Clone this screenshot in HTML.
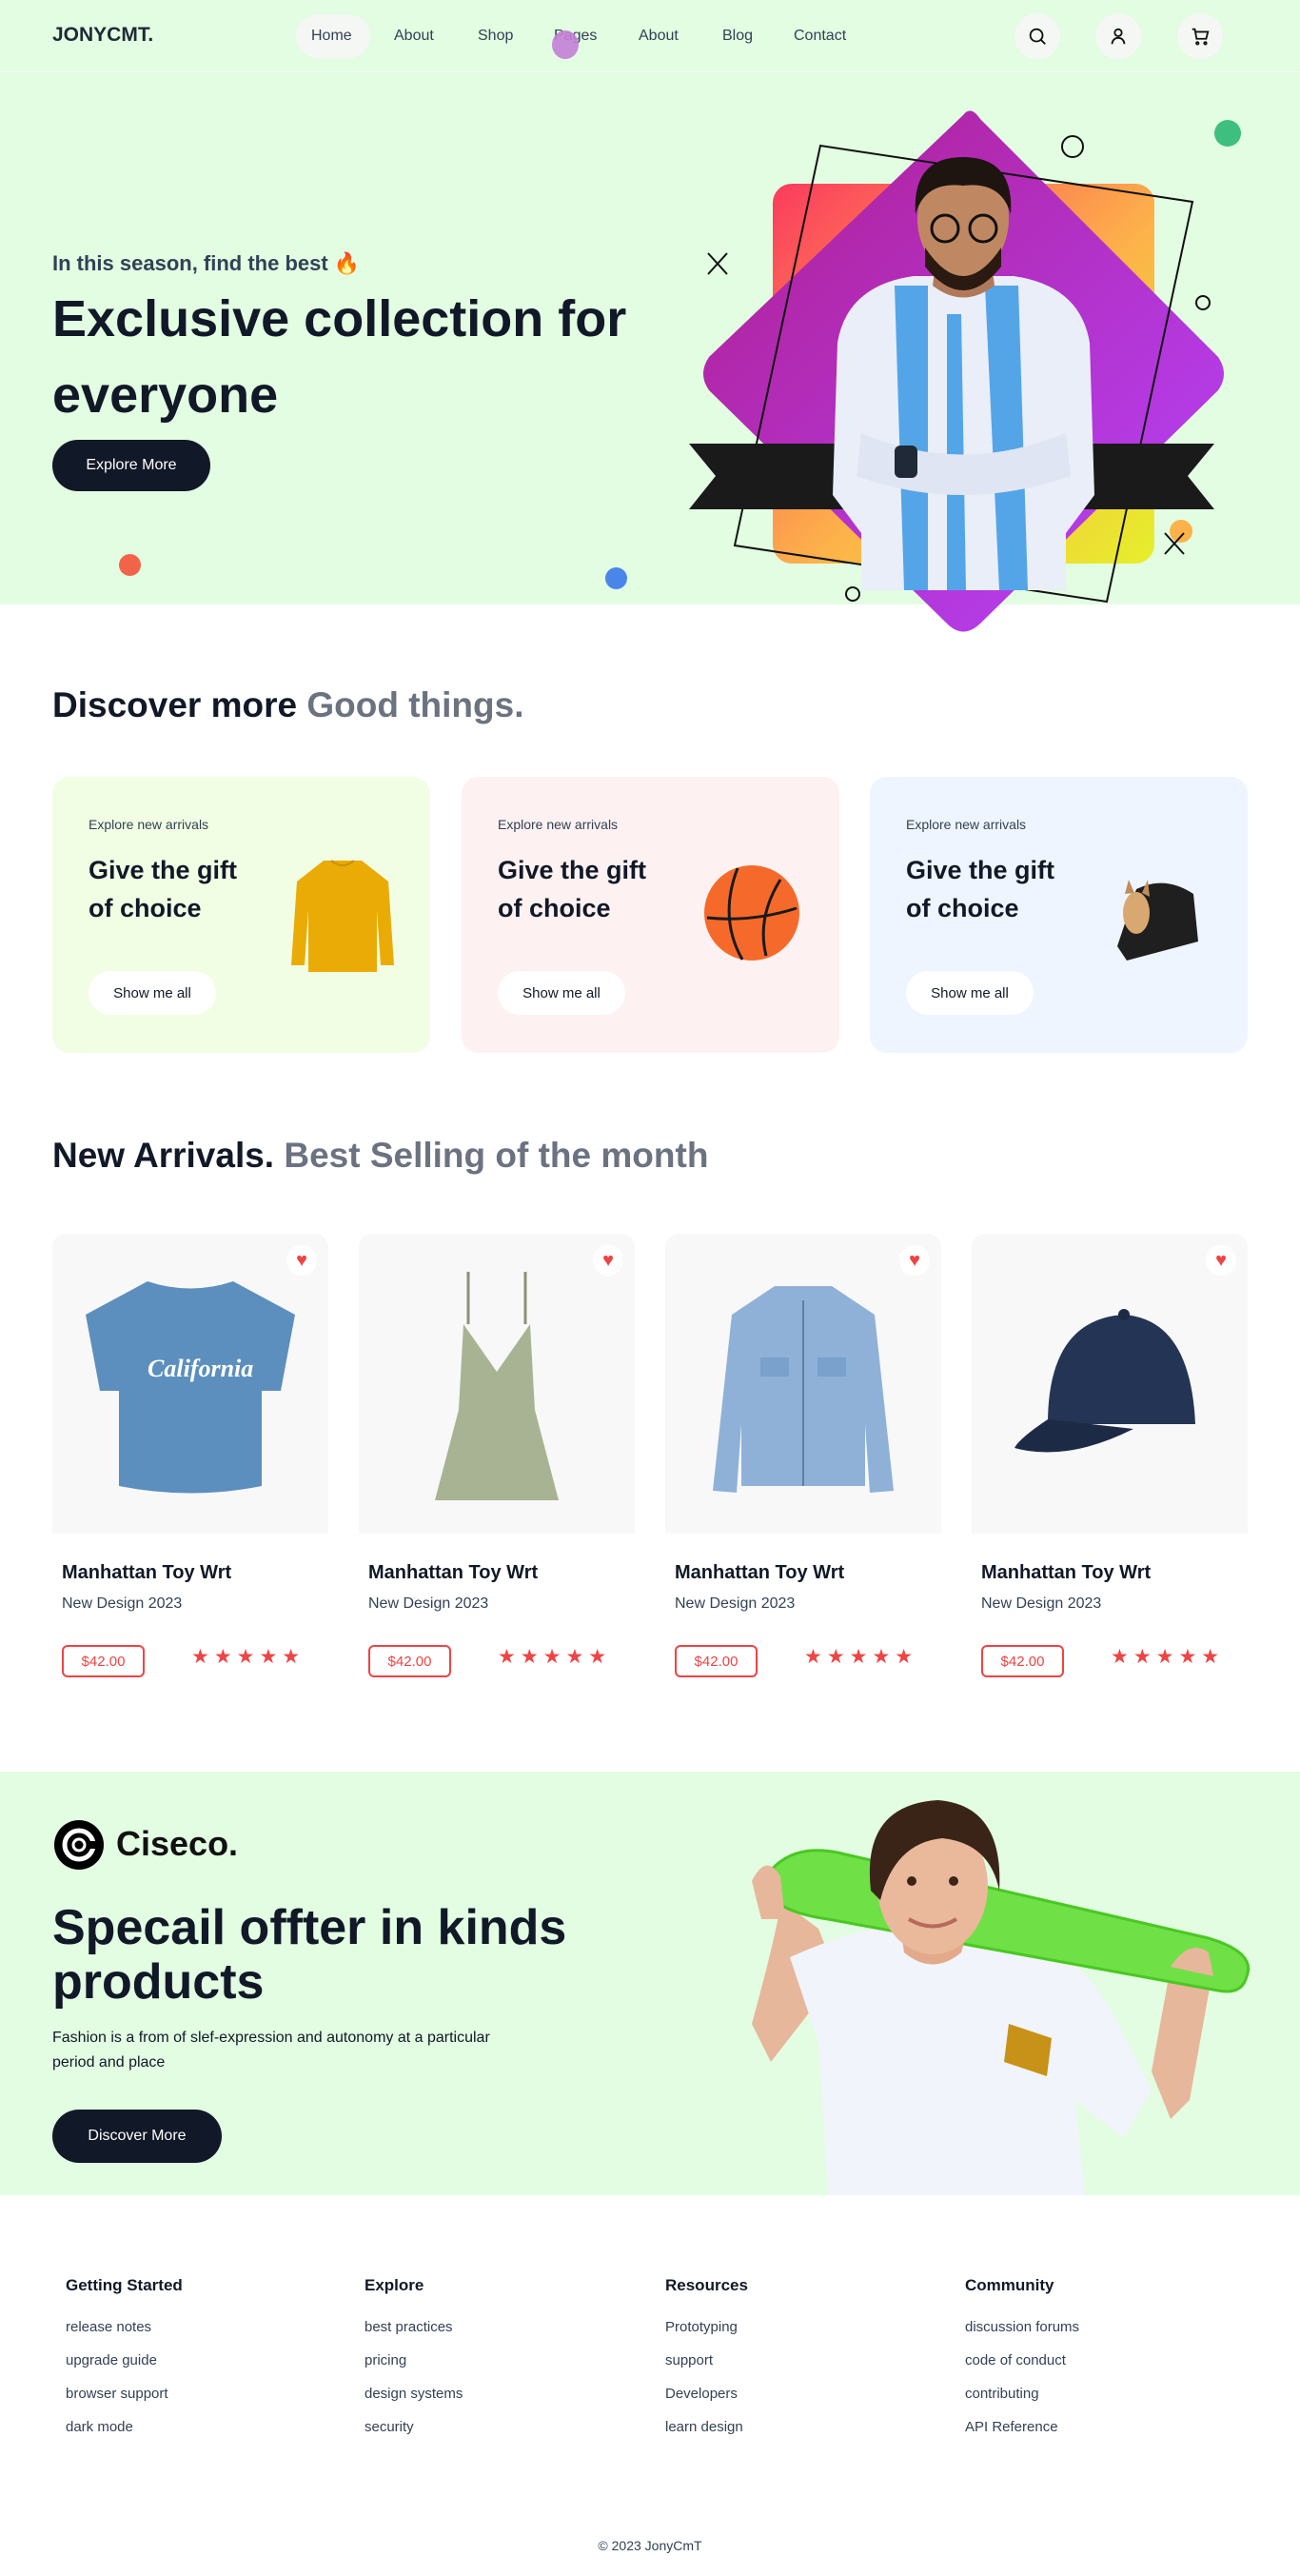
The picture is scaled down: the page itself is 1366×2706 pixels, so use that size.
<!DOCTYPE html>
<html><head><meta charset="utf-8">
<style>
*{margin:0;padding:0;box-sizing:border-box}
body{width:1366px;height:2706px;font-family:"Liberation Sans",sans-serif;color:#111827;background:#fff;position:relative;overflow:hidden}
.abs{position:absolute}
.hero{position:absolute;left:0;top:0;width:1366px;height:635px;background:#e2fde2}
.nav a{position:absolute;top:29px;font-size:16px;color:#334155;text-decoration:none}
.icon{position:absolute;top:14px;width:48px;height:48px;border-radius:50%;background:#f5f7f5;display:flex;align-items:center;justify-content:center}
.btn{position:absolute;background:#111827;color:#fff;border-radius:28px;font-size:16px;display:flex;align-items:center;justify-content:center}
.card{position:absolute;top:816px;width:397px;height:290px;border-radius:18px}
.card .s{position:absolute;left:38px;top:42px;font-size:14px;color:#334155}
.card .t{position:absolute;left:38px;top:78px;font-size:27px;font-weight:bold;line-height:40px;color:#111827}
.card .b{position:absolute;left:38px;top:204px;width:134px;height:46px;border-radius:23px;background:#fff;font-size:15px;display:flex;align-items:center;justify-content:center}
.card svg{position:absolute}
.prod{position:absolute;top:1296px;width:290px}
.prod .img{width:290px;height:315px;background:#f8f8f8;border-radius:14px 14px 0 0;position:relative}
.prod .heart{position:absolute;right:12px;top:12px;width:32px;height:32px;border-radius:50%;background:#fff;color:#ef4444;font-size:20px;display:flex;align-items:center;justify-content:center}
.prod .n{position:absolute;left:10px;top:345px;font-size:20px;font-weight:bold;white-space:nowrap}
.prod .d{position:absolute;left:10px;top:380px;font-size:16px;color:#334155}
.prod .p{position:absolute;left:10px;top:432px;width:87px;height:34px;border:2px solid #ef4444;border-radius:6px;color:#ef4444;font-size:15px;display:flex;align-items:center;justify-content:center}
.prod .st{position:absolute;left:146px;top:432px;color:#ef4444;font-size:21px;letter-spacing:5px}
.fh{position:absolute;top:2391px;font-size:17px;font-weight:bold}
.fl{position:absolute;font-size:15px;color:#334155;line-height:35px}
</style></head><body>
<div class="hero"></div>
<div class="abs" style="left:0;top:75px;width:1366px;height:1px;background:#f4fbf4"></div>
<div class="abs" style="left:55px;top:25px;font-size:21px;font-weight:bold;color:#1f2937">JONYCMT.</div>
<div class="abs" style="left:311px;top:15px;width:78px;height:46px;border-radius:23px;background:#f5f7f5"></div>
<div class="nav">
<a style="left:327px">Home</a><a style="left:414px">About</a><a style="left:502px">Shop</a><a style="left:582px">Pages</a><a style="left:671px">About</a><a style="left:759px">Blog</a><a style="left:834px">Contact</a>
</div>
<div class="abs" style="left:580px;top:32px;width:28px;height:30px;border-radius:50%;background:#c47fd6;opacity:.9"></div>
<div class="icon" style="left:1066px"><svg width="22" height="22" viewBox="0 0 24 24" fill="none" stroke="#111" stroke-width="2"><circle cx="11" cy="11" r="7"/><path d="M16 16l5 5"/></svg></div>
<div class="icon" style="left:1151px"><svg width="22" height="22" viewBox="0 0 24 24" fill="none" stroke="#111" stroke-width="2"><circle cx="12" cy="8" r="4"/><path d="M5 21c0-4 3-7 7-7s7 3 7 7"/></svg></div>
<div class="icon" style="left:1237px"><svg width="22" height="22" viewBox="0 0 24 24" fill="none" stroke="#111" stroke-width="2"><path d="M3 4h3l2 11h11l2-8H7"/><circle cx="9" cy="20" r="1.3"/><circle cx="18" cy="20" r="1.3"/></svg></div>

<div class="abs" style="left:55px;top:264px;font-size:22px;font-weight:bold;color:#334155">In this season, find the best <span style="color:#f97316">🔥</span></div>
<div class="abs" style="left:55px;top:295px;font-size:54px;font-weight:bold;line-height:80px;color:#111827">Exclusive collection for<br>everyone</div>
<div class="btn" style="left:55px;top:462px;width:166px;height:54px">Explore More</div>
<div class="abs" style="left:125px;top:582px;width:23px;height:23px;border-radius:50%;background:#f26449"></div>
<div class="abs" style="left:636px;top:596px;width:23px;height:23px;border-radius:50%;background:#4a86ea"></div>
<div class="abs" style="left:1276px;top:126px;width:28px;height:28px;border-radius:50%;background:#3fbf7f"></div>

<svg class="abs" style="left:700px;top:110px" width="620" height="560" viewBox="700 110 620 560">
<defs>
<linearGradient id="g1" x1="0" y1="0" x2="1" y2="1"><stop offset="0" stop-color="#fb3b5e"/><stop offset=".55" stop-color="#fdb24a"/><stop offset="1" stop-color="#e6f02a"/></linearGradient>
<linearGradient id="g2" x1="0" y1="0" x2="1" y2="1"><stop offset="0" stop-color="#b01f8f"/><stop offset="1" stop-color="#b543ff"/></linearGradient>
</defs>
<rect x="812" y="193" width="401" height="399" rx="20" fill="url(#g1)"/>
<path d="M1012 121 Q1020 110 1030 125 L1280 375 Q1292 393 1280 410 L1030 655 Q1012 672 995 655 L745 410 Q733 393 745 375 Z" fill="url(#g2)"/>
<path d="M862 153 L1253 212 L1163 632 L772 573 Z" fill="none" stroke="#111" stroke-width="2"/>
<path d="M724 466 L1276 466 L1248 500 L1276 535 L724 535 L752 500 Z" fill="#1a1a1a"/>
<circle cx="1127" cy="154" r="11" fill="none" stroke="#111" stroke-width="2"/>
<circle cx="1264" cy="318" r="7" fill="none" stroke="#111" stroke-width="2"/>
<circle cx="896" cy="624" r="7" fill="none" stroke="#111" stroke-width="2"/>
<circle cx="1241" cy="558" r="12" fill="#fdb24a"/>
<path d="M744 266 l20 22 M764 266 l-20 22 M1224 560 l20 22 M1244 560 l-20 22" stroke="#111" stroke-width="2"/>
<path d="M880 360 Q890 300 960 290 L1065 290 Q1135 300 1145 360 L1150 520 L1120 560 L1120 620 L905 620 L905 560 L875 520 Z" fill="#e9eef8"/>
<path d="M940 300 L975 300 L975 620 L950 620 Z M1035 300 L1070 300 L1080 620 L1050 620 Z M995 330 L1010 330 L1015 620 L995 620Z" fill="#54a5e8"/>
<path d="M905 455 Q1010 500 1120 455 L1125 500 Q1010 540 900 500 Z" fill="#dfe5f2"/>
<rect x="940" y="468" width="24" height="34" rx="6" fill="#1f2937"/>
<path d="M985 262 L1040 262 L1045 300 Q1012 325 980 300 Z" fill="#b07a5a"/>
<ellipse cx="1012" cy="230" rx="48" ry="60" fill="#c08862"/>
<path d="M972 260 Q1012 320 1052 260 L1052 280 Q1012 330 972 280 Z" fill="#2a1a12"/>
<path d="M962 225 Q958 165 1012 165 Q1066 165 1062 225 Q1052 190 1012 195 Q972 190 962 225 Z" fill="#1e1410"/>
<circle cx="993" cy="240" r="14" fill="none" stroke="#111" stroke-width="3"/><circle cx="1033" cy="240" r="14" fill="none" stroke="#111" stroke-width="3"/>
</svg>

<div class="abs" style="left:55px;top:720px;font-size:37px;font-weight:bold;color:#111827">Discover more <span style="color:#6b7280">Good things.</span></div>

<div class="card" style="left:55px;background:#f1fee4">
<div class="s">Explore new arrivals</div><div class="t">Give the gift<br>of choice</div><div class="b">Show me all</div>
<svg style="left:245px;top:80px" width="120" height="130" viewBox="0 0 120 130"><path d="M40 8 L80 8 L108 30 L114 118 L100 118 L96 60 L96 125 L24 125 L24 60 L20 118 L6 118 L12 30 Z" fill="#eaab06"/><path d="M48 8 Q60 18 72 8" stroke="#c98f00" fill="none" stroke-width="2"/></svg>
</div>
<div class="card" style="left:485px;background:#fdf1f1">
<div class="s">Explore new arrivals</div><div class="t">Give the gift<br>of choice</div><div class="b">Show me all</div>
<svg style="left:250px;top:88px" width="110" height="110" viewBox="0 0 110 110"><circle cx="55" cy="55" r="50" fill="#f56a2a"/><path d="M40 8 Q20 60 45 104 M85 20 Q60 60 70 100 M8 60 Q55 65 102 50" stroke="#1a1a1a" stroke-width="3" fill="none"/></svg>
</div>
<div class="card" style="left:914px;background:#eef5fe">
<div class="s">Explore new arrivals</div><div class="t">Give the gift<br>of choice</div><div class="b">Show me all</div>
<svg style="left:250px;top:98px" width="100" height="100" viewBox="0 0 100 100"><path d="M30 20 Q60 5 90 25 L95 75 L20 95 L10 80 Z" fill="#1f1f1f"/><ellipse cx="30" cy="45" rx="14" ry="22" fill="#d8a870"/><path d="M18 25 L22 10 L28 24 M36 24 L42 10 L44 28" fill="#c08c5a"/></svg>
</div>

<div class="abs" style="left:55px;top:1193px;font-size:37px;font-weight:bold;color:#111827">New Arrivals. <span style="color:#6b7280">Best Selling of the month</span></div>

<div class="prod" style="left:55px"><div class="img"><div class="heart">♥</div>
<svg style="position:absolute;left:30px;top:45px" width="230" height="230" viewBox="0 0 230 230"><path d="M70 5 Q115 20 160 5 L225 40 L210 120 L190 120 L190 220 Q115 235 40 220 L40 120 L20 120 L5 40 Z" fill="#5c8fbd"/><text x="70" y="105" font-family="Liberation Serif" font-style="italic" font-weight="bold" font-size="26" fill="#fff">California</text></svg></div>
<div class="n">Manhattan Toy Wrt</div><div class="d">New Design 2023</div><div class="p">$42.00</div><div class="st">★★★★★</div></div>

<div class="prod" style="left:377px"><div class="img"><div class="heart">♥</div>
<svg style="position:absolute;left:75px;top:35px" width="140" height="250" viewBox="0 0 140 250"><path d="M40 5 L40 60 M100 5 L100 60" stroke="#8a9278" stroke-width="3"/><path d="M35 60 L70 110 L105 60 L110 150 L135 245 L5 245 L30 150 Z" fill="#a8b394"/></svg></div>
<div class="n">Manhattan Toy Wrt</div><div class="d">New Design 2023</div><div class="p">$42.00</div><div class="st">★★★★★</div></div>

<div class="prod" style="left:699px"><div class="img"><div class="heart">♥</div>
<svg style="position:absolute;left:45px;top:50px" width="200" height="230" viewBox="0 0 200 230"><path d="M70 5 L130 5 L175 35 L195 220 L170 222 L165 150 L165 215 L35 215 L35 150 L30 222 L5 220 L25 35 Z" fill="#8fb1d8"/><path d="M100 20 L100 215" stroke="#5e7fa8" stroke-width="2"/><rect x="55" y="80" width="30" height="20" fill="#7aa0cc"/><rect x="115" y="80" width="30" height="20" fill="#7aa0cc"/></svg></div>
<div class="n">Manhattan Toy Wrt</div><div class="d">New Design 2023</div><div class="p">$42.00</div><div class="st">★★★★★</div></div>

<div class="prod" style="left:1021px"><div class="img"><div class="heart">♥</div>
<svg style="position:absolute;left:40px;top:70px" width="210" height="180" viewBox="0 0 210 180"><path d="M40 130 Q40 20 120 15 Q190 20 195 130 Z" fill="#243454"/><path d="M40 125 Q10 145 5 155 Q60 170 130 135 Z" fill="#1c2a45"/><circle cx="120" cy="15" r="6" fill="#1c2a45"/></svg></div>
<div class="n">Manhattan Toy Wrt</div><div class="d">New Design 2023</div><div class="p">$42.00</div><div class="st">★★★★★</div></div>

<div class="abs" style="left:0;top:1861px;width:1366px;height:445px;background:#e2fde2;overflow:hidden">
<svg class="abs" style="left:55px;top:47px" width="56" height="60" viewBox="0 0 56 60"><circle cx="28" cy="30" r="26" fill="#000"/><circle cx="28" cy="30" r="15" fill="none" stroke="#fff" stroke-width="5"/><circle cx="28" cy="30" r="6" fill="#000" stroke="#fff" stroke-width="3"/><rect x="36" y="26" width="12" height="8" fill="#000"/></svg>
<div class="abs" style="left:122px;top:55px;font-size:36px;font-weight:bold;color:#111">Ciseco.</div>
<div class="abs" style="left:55px;top:136px;font-size:52px;font-weight:bold;line-height:57px;color:#111827">Specail offter in kinds<br>products</div>
<div class="abs" style="left:55px;top:267px;font-size:16px;line-height:26px;color:#111827">Fashion is a from of slef-expression and autonomy at a particular<br>period and place</div>
<div class="btn" style="left:55px;top:355px;width:178px;height:56px">Discover More</div>
<svg class="abs" style="left:710px;top:15px" width="620" height="430" viewBox="0 0 620 430">
<path d="M100 290 L80 250 Q110 140 110 120 L150 150 L170 200 Z" fill="#e7b79b"/>
<path d="M565 190 L540 330 L520 350 L500 300 L520 190 Z" fill="#e7b79b"/>
<path d="M120 180 Q230 130 310 150 Q420 150 470 260 L500 320 L470 370 L420 330 L430 430 L160 430 L150 270 Z" fill="#f1f4fa"/>
<path d="M350 250 L395 265 L390 305 L345 290 Z" fill="#c79217"/>
<path d="M95 95 Q120 60 170 70 L560 160 Q610 175 600 200 Q595 220 570 215 L160 140 Q90 130 95 95 Z" fill="#6fe046" stroke="#4bc723" stroke-width="3"/>
<path d="M310 140 L300 175 Q270 200 240 175 L235 140 Z" fill="#e2aa8b"/>
<ellipse cx="270" cy="105" rx="58" ry="72" fill="#eab99c"/>
<path d="M205 110 Q195 20 275 15 Q345 20 340 110 Q330 60 280 55 Q230 60 215 120 Z" fill="#3a2418"/>
<path d="M245 140 Q270 155 295 140" stroke="#b86a5a" stroke-width="4" fill="none"/>
<circle cx="248" cy="100" r="5" fill="#3a2418"/><circle cx="292" cy="100" r="5" fill="#3a2418"/>
<path d="M80 100 Q95 70 110 95 L115 140 L90 140 Z M520 190 Q540 160 560 175 L565 200 Z" fill="#e7b79b"/>
</svg>
</div>

<div class="fh" style="left:69px">Getting Started</div>
<div class="fh" style="left:383px">Explore</div>
<div class="fh" style="left:699px">Resources</div>
<div class="fh" style="left:1014px">Community</div>
<div class="fl" style="left:69px;top:2427px">release notes<br>upgrade guide<br>browser support<br>dark mode</div>
<div class="fl" style="left:383px;top:2427px">best practices<br>pricing<br>design systems<br>security</div>
<div class="fl" style="left:699px;top:2427px">Prototyping<br>support<br>Developers<br>learn design</div>
<div class="fl" style="left:1014px;top:2427px">discussion forums<br>code of conduct<br>contributing<br>API Reference</div>
<div class="abs" style="left:0;top:2666px;width:1366px;text-align:center;font-size:14px;color:#334155">© 2023 JonyCmT</div>
</body></html>
